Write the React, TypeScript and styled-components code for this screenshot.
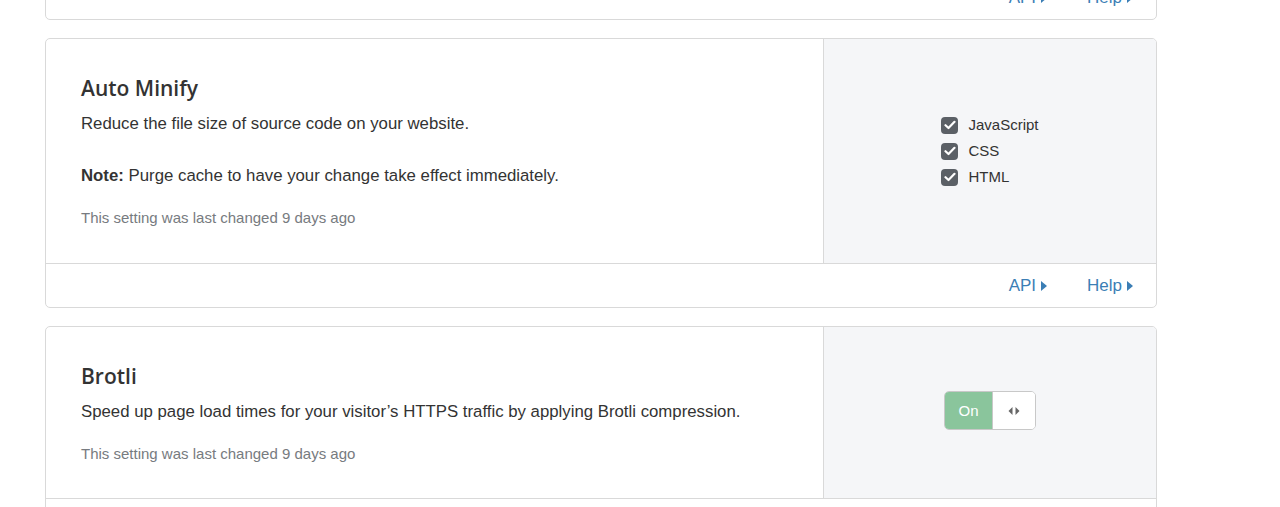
import styled, { createGlobalStyle } from 'styled-components';

const GlobalStyle = createGlobalStyle`
  html, body {
    margin: 0;
    padding: 0;
    background: #ffffff;
    font-family: "Liberation Sans", Arial, sans-serif;
    color: #333333;
    overflow: hidden;
  }
`;

const Page = styled.div`
  width: 1112px;
  margin-left: 45px;
  display: flex;
  flex-direction: column;
  gap: 18px;
`;

const Card = styled.div<{ $offset?: number }>`
  border: 1px solid #d9d9d9;
  border-radius: 5px;
  background: #fff;
  overflow: hidden;
  margin-top: ${(p) => (p.$offset ? `${p.$offset}px` : '0')};
`;

const CardBody = styled.div`
  display: flex;
  border-bottom: 1px solid #d9d9d9;
`;

const Main = styled.div<{ $height: number }>`
  flex: 1;
  height: ${(p) => p.$height}px;
  padding: 35px 35px 0 35px;
  box-sizing: border-box;
`;

const Side = styled.div`
  width: 332px;
  flex-shrink: 0;
  background: #f5f6f8;
  border-left: 1px solid #d9d9d9;
  display: flex;
  align-items: center;
  justify-content: center;
`;

const Title = styled.h3`
  margin: 0 0 11px;
  font-family: "Open Sans", sans-serif;
  font-weight: 600;
  font-size: 21px;
  line-height: 28px;
  color: #333;
`;

const Text = styled.p<{ $gap?: number }>`
  margin: 0 0 ${(p) => p.$gap ?? 0}px;
  font-size: 16.8px;
  line-height: 22px;
  color: #333;
`;

const Meta = styled.p`
  margin: 0;
  font-size: 15px;
  line-height: 20px;
  color: #777b80;
`;

const Footer = styled.div`
  height: 43px;
  display: flex;
  align-items: center;
  justify-content: flex-end;
  gap: 40px;
  padding-right: 23px;
`;

const FooterLink = styled.a`
  display: inline-flex;
  align-items: center;
  gap: 5px;
  font-size: 17px;
  color: #3b7eb5;
  text-decoration: none;
  cursor: pointer;
`;

const Caret = styled.span`
  width: 0;
  height: 0;
  border-top: 5px solid transparent;
  border-bottom: 5px solid transparent;
  border-left: 6px solid #3b7eb5;
  margin-top: 1px;
`;

const CheckList = styled.div`
  display: flex;
  flex-direction: column;
  gap: 8px;
`;

const CheckRow = styled.label`
  display: flex;
  align-items: center;
  gap: 10px;
  font-size: 15px;
  line-height: 18px;
  color: #333;
`;

const Box = styled.span`
  width: 17px;
  height: 17px;
  border-radius: 4px;
  background: #5b6066;
  display: flex;
  align-items: center;
  justify-content: center;
`;

const Toggle = styled.div`
  display: flex;
  width: 92px;
  height: 39px;
  border: 1px solid #c8c8c8;
  border-radius: 5px;
  overflow: hidden;
  box-sizing: border-box;
  margin-top: -4px;
`;

const ToggleOn = styled.div`
  width: 47px;
  background: #8ac59c;
  color: #fff;
  font-size: 15px;
  display: flex;
  align-items: center;
  justify-content: center;
`;

const ToggleKnob = styled.div`
  flex: 1;
  background: #fff;
  border-left: 1px solid #c8c8c8;
  display: flex;
  align-items: center;
  justify-content: center;
`;

const Check = () => (
  <Box>
    <svg width="12" height="10" viewBox="0 0 12 10">
      <path d="M1.5 5.2 L4.5 8 L10.5 1.8" fill="none" stroke="#fff" strokeWidth="2.2" strokeLinecap="round" strokeLinejoin="round" />
    </svg>
  </Box>
);

const Links = () => (
  <Footer>
    <FooterLink>API <Caret /></FooterLink>
    <FooterLink>Help <Caret /></FooterLink>
  </Footer>
);

export default function App() {
  return (
    <>
      <GlobalStyle />
      <Page>
        <Card $offset={-25}>
          <Links />
        </Card>

        <Card>
          <CardBody>
            <Main $height={224}>
              <Title>Auto Minify</Title>
              <Text $gap={30}>Reduce the file size of source code on your website.</Text>
              <Text $gap={21}>
                <b>Note:</b> Purge cache to have your change take effect immediately.
              </Text>
              <Meta>This setting was last changed 9 days ago</Meta>
            </Main>
            <Side>
              <CheckList>
                {['JavaScript', 'CSS', 'HTML'].map((l) => (
                  <CheckRow key={l}>
                    <Check />
                    {l}
                  </CheckRow>
                ))}
              </CheckList>
            </Side>
          </CardBody>
          <Links />
        </Card>

        <Card>
          <CardBody>
            <Main $height={171}>
              <Title>Brotli</Title>
              <Text $gap={21}>
                Speed up page load times for your visitor’s HTTPS traffic by applying Brotli compression.
              </Text>
              <Meta>This setting was last changed 9 days ago</Meta>
            </Main>
            <Side>
              <Toggle>
                <ToggleOn>On</ToggleOn>
                <ToggleKnob>
                  <svg width="12" height="10" viewBox="0 0 12 10">
                    <path d="M4.5 1 L0.5 5 L4.5 9 Z" fill="#666" />
                    <path d="M7.5 1 L11.5 5 L7.5 9 Z" fill="#666" />
                  </svg>
                </ToggleKnob>
              </Toggle>
            </Side>
          </CardBody>
          <Links />
        </Card>
      </Page>
    </>
  );
}
